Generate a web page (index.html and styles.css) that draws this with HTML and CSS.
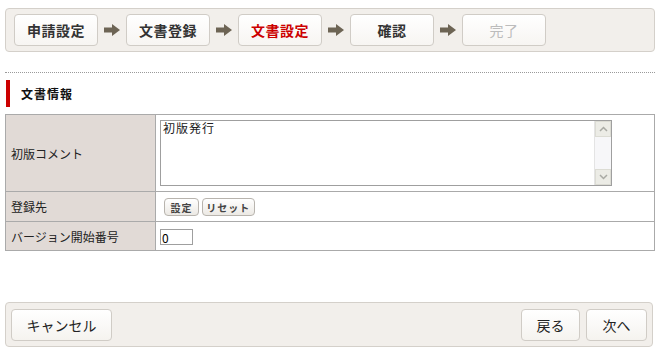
FILE: index.html
```html
<!DOCTYPE html>
<html lang="ja">
<head>
    <meta charset="UTF-8">
    <title>文書設定</title>
    <link rel="stylesheet" href="styles.css">
</head>
<body>
    <div class="page">
        <div class="steps">
            <div class="step">申請設定</div>
            <svg class="arrow" width="16" height="12" viewBox="0 0 16 12"><path d="M0 3.5h8V0l8 6-8 6V8.5H0z" fill="#6d6454"/></svg>
            <div class="step">文書登録</div>
            <svg class="arrow" width="16" height="12" viewBox="0 0 16 12"><path d="M0 3.5h8V0l8 6-8 6V8.5H0z" fill="#6d6454"/></svg>
            <div class="step current">文書設定</div>
            <svg class="arrow" width="16" height="12" viewBox="0 0 16 12"><path d="M0 3.5h8V0l8 6-8 6V8.5H0z" fill="#6d6454"/></svg>
            <div class="step">確認</div>
            <svg class="arrow" width="16" height="12" viewBox="0 0 16 12"><path d="M0 3.5h8V0l8 6-8 6V8.5H0z" fill="#6d6454"/></svg>
            <div class="step disabled">完了</div>
        </div>

        <div class="rule"></div>
        <h2 class="heading">文書情報</h2>

        <table class="form">
            <tr class="row-memo">
                <th>初版コメント</th>
                <td>
                    <div class="memo">
                        <textarea>初版発行</textarea>
                        <div class="scroll">
                            <div class="scroll-btn"><svg width="9" height="6" viewBox="0 0 9 6"><path d="M1 5l3.5-3.5L8 5" fill="none" stroke="#a9aaa4" stroke-width="1.5"/></svg></div>
                            <div class="scroll-track"></div>
                            <div class="scroll-btn"><svg width="9" height="6" viewBox="0 0 9 6"><path d="M1 1l3.5 3.5L8 1" fill="none" stroke="#a9aaa4" stroke-width="1.5"/></svg></div>
                        </div>
                    </div>
                </td>
            </tr>
            <tr class="row-dest">
                <th>登録先</th>
                <td>
                    <button class="small set">設定</button>
                    <button class="small reset">リセット</button>
                </td>
            </tr>
            <tr class="row-ver">
                <th>バージョン開始番号</th>
                <td><input type="text" class="num" value="0"></td>
            </tr>
        </table>

        <div class="actions">
            <button class="big cancel">キャンセル</button>
            <div class="right">
                <button class="big back">戻る</button>
                <button class="big next">次へ</button>
            </div>
        </div>
    </div>
</body>
</html>
```

FILE: styles.css
```css
body {
    margin: 0;
    font-family: "Noto Sans CJK JP", "Noto Sans", sans-serif;
    font-size: 12px;
    color: #222;
    background-color: white;
}
.page {
    width: 650px;
    padding: 8px 0 0 5px;
}
.steps {
    display: flex;
    align-items: center;
    width: 632px;
    height: 32px;
    padding: 5px 8px;
    border: 1px solid #d4d0ca;
    border-radius: 4px;
    background-color: #f2efeb;
}
.step {
    width: 82px;
    height: 30px;
    line-height: 30px;
    text-align: center;
    font-size: 14px;
    letter-spacing: 0.5px;
    font-weight: bold;
    color: #333;
    border: 1px solid #d0ccc6;
    border-radius: 4px;
    background: linear-gradient(#ffffff, #f7f5f2);
}
.step.current {
    color: #cc0000;
}
.step.disabled {
    color: #bcbcbc;
    font-weight: normal;
}
.arrow {
    margin: 0 6px;
}
.rule {
    margin-top: 20px;
    border-top: 1px dotted #9a9a9a;
}
.heading {
    margin: 7px 0 0 1px;
    height: 27px;
    line-height: 27px;
    padding-left: 11px;
    border-left: 4px solid #cc0000;
    font-size: 12px;
    letter-spacing: 1px;
    font-weight: bold;
    color: #111;
}
.form {
    margin-top: 7px;
    width: 650px;
    border-collapse: collapse;
    border: 1px solid #aaa;
}
.form th, .form td {
    border: 1px solid #aaa;
    padding: 0 4px;
    text-align: left;
}
.form th {
    width: 140px;
    padding-left: 5px;
    font-weight: normal;
    background-color: #e1dad6;
}
.row-memo {
    height: 77px;
}
.row-dest {
    height: 30px;
}
.row-ver {
    height: 29px;
}
.memo {
    display: flex;
    width: 450px;
    height: 64px;
    border: 1px solid #9f9f9f;
}
.memo textarea {
    flex: 1;
    border: none;
    resize: none;
    padding: 0 2px;
    font-family: "Noto Sans CJK JP", sans-serif;
    font-size: 12px;
    letter-spacing: 1px;
    line-height: 14px;
    color: #222;
    outline: none;
}
.scroll {
    width: 16px;
    display: flex;
    flex-direction: column;
    background-color: #f7f7f9;
    border-left: 1px solid #e4e4e4;
}
.scroll-btn {
    height: 14px;
    display: flex;
    align-items: center;
    justify-content: center;
    background-color: #ecece6;
    border: 1px solid #dcdcd4;
}
.scroll-track {
    flex: 1;
}
button.small {
    height: 18px;
    padding: 0;
    font-family: "Noto Sans CJK JP", sans-serif;
    font-size: 10px;
    letter-spacing: 1px;
    font-weight: bold;
    color: #444;
    border: 1px solid #b8b4ae;
    border-radius: 4px;
    background: linear-gradient(#ffffff, #ece9e4);
    vertical-align: middle;
}
.set {
    width: 35px;
    margin-left: 4px;
    margin-right: 0;
}
.reset {
    width: 53px;
}
.num {
    width: 29px;
    height: 14px;
    padding: 0 1px;
    border: 1px solid #9f9f9f;
    font-family: "Noto Sans CJK JP", sans-serif;
    font-size: 12px;
    vertical-align: middle;
}
.actions {
    display: flex;
    justify-content: space-between;
    align-items: center;
    margin-top: 51px;
    width: 636px;
    height: 33px;
    padding: 5px;
    border: 1px solid #d4d0ca;
    border-radius: 4px;
    background-color: #f2efeb;
}
.right {
    display: flex;
    gap: 6px;
}
button.big {
    height: 32px;
    font-family: "Noto Sans CJK JP", sans-serif;
    font-size: 14px;
    color: #222;
    border: 1px solid #d0ccc6;
    border-radius: 4px;
    background: linear-gradient(#ffffff, #f5f3ef);
}
.cancel {
    width: 101px;
}
.back {
    width: 59px;
}
.next {
    width: 61px;
}
```
